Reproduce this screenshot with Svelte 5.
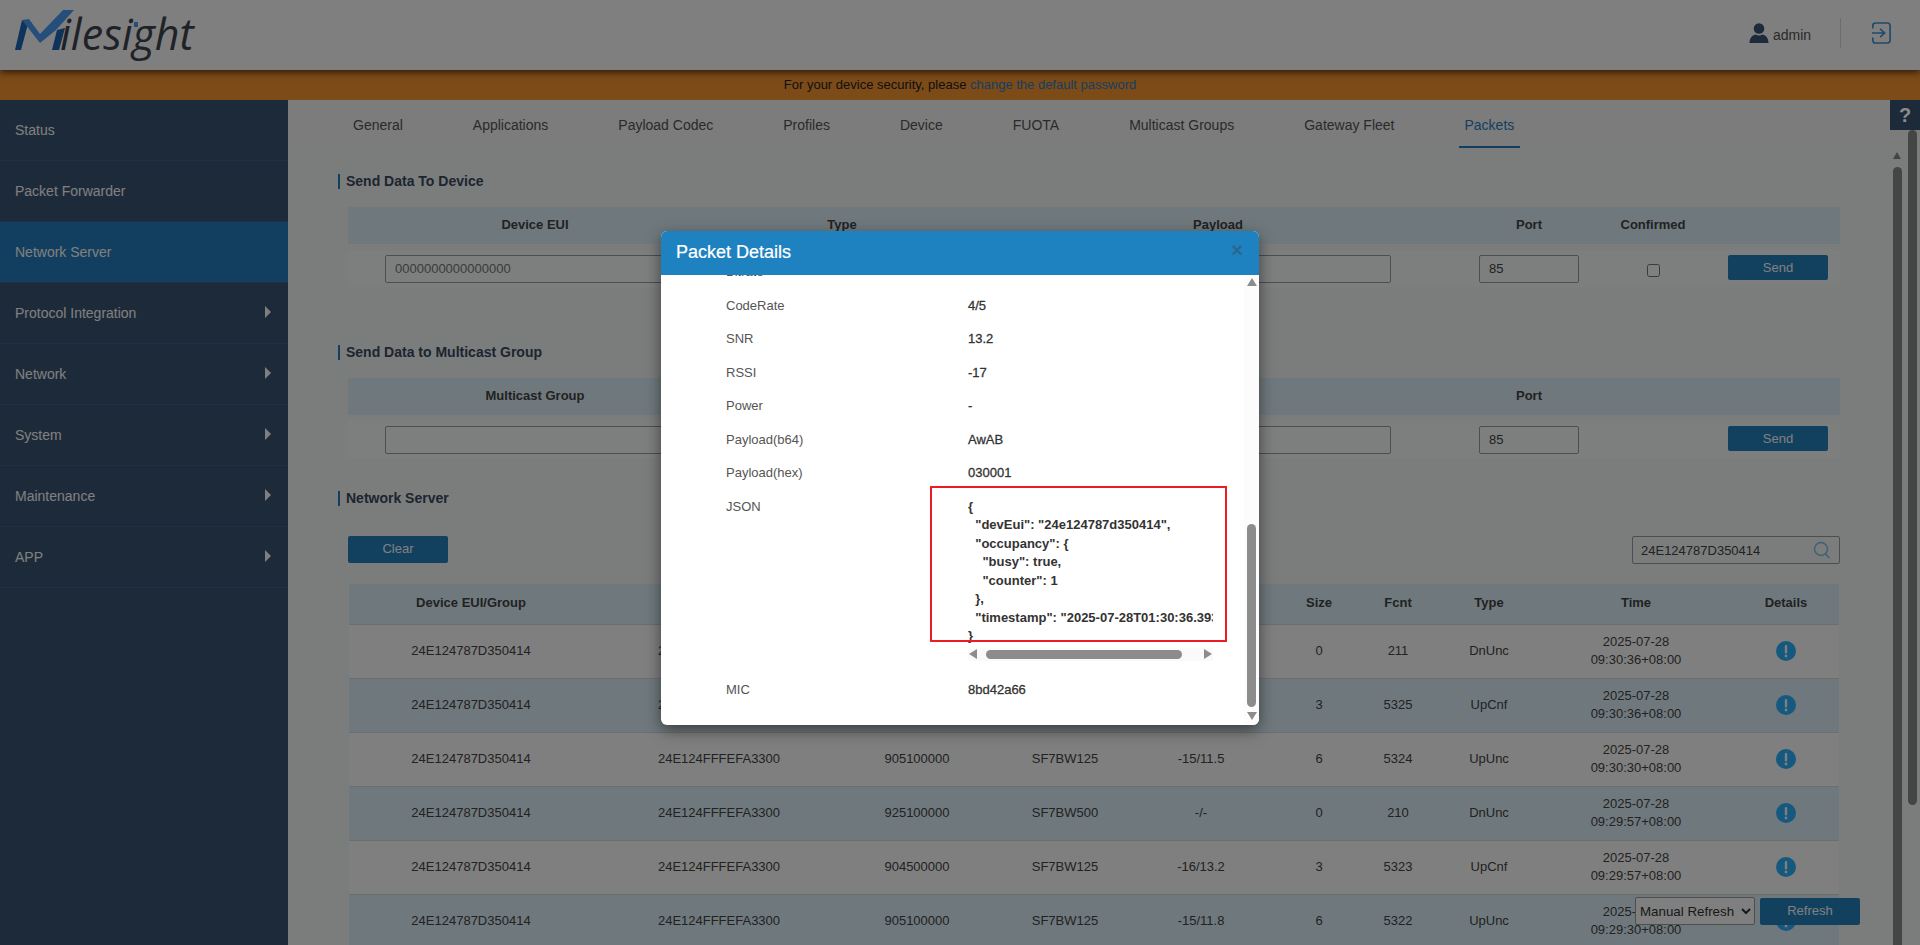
<script>
  const nav = [
    { label: 'Status' }, { label: 'Packet Forwarder' }, { label: 'Network Server', active: true },
    { label: 'Protocol Integration', arrow: true }, { label: 'Network', arrow: true }, { label: 'System', arrow: true },
    { label: 'Maintenance', arrow: true }, { label: 'APP', arrow: true }
  ];
  const tabs = ['General', 'Applications', 'Payload Codec', 'Profiles', 'Device', 'FUOTA', 'Multicast Groups', 'Gateway Fleet', 'Packets'];
  const heads = ['Device EUI/Group', 'Gateway', 'Frequency', 'Datarate', 'RSSI/SNR', 'Size', 'Fcnt', 'Type', 'Time', 'Details'];
  const packets = [
    ['925100000', 'SF7BW500', '-/-', '0', '211', 'DnUnc', '09:30:36+08:00'],
    ['904500000', 'SF7BW125', '-17/13.2', '3', '5325', 'UpCnf', '09:30:36+08:00'],
    ['905100000', 'SF7BW125', '-15/11.5', '6', '5324', 'UpUnc', '09:30:30+08:00'],
    ['925100000', 'SF7BW500', '-/-', '0', '210', 'DnUnc', '09:29:57+08:00'],
    ['904500000', 'SF7BW125', '-16/13.2', '3', '5323', 'UpCnf', '09:29:57+08:00'],
    ['905100000', 'SF7BW125', '-15/11.8', '6', '5322', 'UpUnc', '09:29:30+08:00']
  ];
  const details = [
    ['Bitrate', '-'], ['CodeRate', '4/5'], ['SNR', '13.2'], ['RSSI', '-17'], ['Power', '-'],
    ['Payload(b64)', 'AwAB'], ['Payload(hex)', '030001']
  ];
  const json = `{
  "devEui": "24e124787d350414",
  "occupancy": {
    "busy": true,
    "counter": 1
  },
  "timestamp": "2025-07-28T01:30:36.393+00:00"
}`;
</script>

<div class="page">
  <header class="top">
    <div class="logo">
      <span class="word">ilesight<i class="tittle"></i></span>
      <svg class="mark" width="62" height="42" viewBox="0 0 62 42">
        <polygon class="m-dark" points="0,41 6,41 13,15 7,11" />
        <polygon class="m-mid" points="7,11 14,10 25,25 48,1 59,1 41,21 25,34" />
        <polygon class="m-dark" points="37,41 44,41 50,19 42,21" />
      </svg>
    </div>
    <div class="user">
      <svg width="20" height="20" viewBox="0 0 20 20">
        <circle cx="10" cy="5.5" r="5.3" fill="#3a5474" />
        <path d="M0.5 20c0-5 2.5-7.5 6-8.5 2 1.4 5 1.4 7 0 3.5 1 6 3.500 6 8.500z" fill="#3a5474" />
      </svg>
      <span>admin</span>
    </div>
    <div class="sep"></div>
    <svg class="logout" width="20" height="24" viewBox="0 0 22 24" fill="none" stroke="#3d95d0" stroke-width="1.8">
      <path d="M2 7V4q0-3 3-3h13q3 0 3 3v16q0 3-3 3H5q-3 0-3-3v-3" />
      <path d="M1 12h13M10 7.500l5 4.500-5 4.500" />
    </svg>
  </header>

  <div class="banner">For your device security, please <a href="#top">change the default password</a></div>

  <div class="main">
    <aside class="side">
      {#each nav as n}
        <div class="nav" class:active={n.active}>
          <span>{n.label}</span>
          {#if n.arrow}<i class="tri"></i>{/if}
        </div>
      {/each}
    </aside>

    <section class="content">
      <nav class="tabs">
        {#each tabs as t}
          <span class="tab" class:on={t === 'Packets'}>{t}</span>
        {/each}
      </nav>

      <div class="body">
        <h3 class="title first">Send Data To Device</h3>
        <div class="send head">
          <span>Device EUI</span><span>Type</span><span>Payload</span><span>Port</span><span>Confirmed</span><span></span>
        </div>
        <div class="send row">
          <span><input class="field wide" value="0000000000000000" readonly /></span>
          <span></span>
          <span><input class="field pay" readonly /></span>
          <span><input class="field port" value="85" readonly /></span>
          <span><input class="check" type="checkbox" /></span>
          <span class="act"><button class="btn">Send</button></span>
        </div>

        <h3 class="title second">Send Data to Multicast Group</h3>
        <div class="send head">
          <span>Multicast Group</span><span>Type</span><span>Payload</span><span>Port</span><span></span><span></span>
        </div>
        <div class="send row">
          <span><input class="field wide" readonly /></span>
          <span></span>
          <span><input class="field pay" readonly /></span>
          <span><input class="field port" value="85" readonly /></span>
          <span></span>
          <span class="act"><button class="btn">Send</button></span>
        </div>

        <h3 class="title third">Network Server</h3>
        <div class="tools">
          <button class="btn clear">Clear</button>
          <div class="search">
            <span>24E124787D350414</span>
            <svg width="18" height="18" viewBox="0 0 18 18" fill="none" stroke="#7cbfe0" stroke-width="1.4">
              <circle cx="8" cy="8" r="6.500" /><path d="M12.500 13l4 4" />
            </svg>
          </div>
        </div>

        <table class="grid">
          <colgroup>
            <col class="c1" /><col class="c2" /><col class="c3" /><col class="c4" /><col class="c5" />
            <col class="c6" /><col class="c7" /><col class="c8" /><col class="c9" /><col class="c10" />
          </colgroup>
          <thead>
            <tr>{#each heads as h}<th>{h}</th>{/each}</tr>
          </thead>
          <tbody>
            {#each packets as p}
              <tr>
                <td>24E124787D350414</td>
                <td>24E124FFFEFA3300</td>
                <td>{p[0]}</td><td>{p[1]}</td><td>{p[2]}</td><td>{p[3]}</td><td>{p[4]}</td><td>{p[5]}</td>
                <td>2025-07-28<br />{p[6]}</td>
                <td>
                  <svg class="info" width="20" height="20" viewBox="0 0 20 20">
                    <circle cx="10" cy="10" r="10" fill="#2ab2ff" />
                    <rect x="8.800" y="4" width="2.400" height="8.500" rx="1" fill="#fff" />
                    <circle cx="10" cy="15" r="1.400" fill="#fff" />
                  </svg>
                </td>
              </tr>
            {/each}
          </tbody>
        </table>
      </div>

      <div class="inner-bar"><i class="up"></i><b></b></div>
    </section>

    <div class="refresh">
      <select><option>Manual Refresh</option></select>
      <button class="btn ref">Refresh</button>
    </div>
    <div class="page-bar"></div>
  </div>

  <div class="shade"></div>
  <div class="help">?</div>

  <div class="modal">
    <div class="m-head"><span>Packet Details</span><b>×</b></div>
    <div class="m-body">
      <div class="m-rows">
        {#each details as d}
          <div class="m-row"><span class="k">{d[0]}</span><span class="v">{d[1]}</span></div>
        {/each}
        <div class="m-row json">
          <span class="k">JSON</span>
          <div class="jwrap">
            <pre>{json}</pre>
            <div class="hbar"><i class="l"></i><b></b><i class="r"></i></div>
          </div>
        </div>
        <div class="m-row"><span class="k">MIC</span><span class="v">8bd42a66</span></div>
      </div>
      <div class="m-scroll"><i class="up"></i><b></b><i class="down"></i></div>
    </div>
    <div class="mark-box"></div>
  </div>
</div>

<style>
  :global(body) { margin: 0; font-family: "Liberation Sans", Arial, sans-serif; }
  .page { position: relative; height: 945px; overflow: hidden; background: #f6faf8; color: #333; font-size: 13px; }
  .top { position: relative; z-index: 2; height: 70px; background: #fff; box-shadow: 0 2px 7px rgba(0,0,0,.7); display: flex; align-items: center; }
  .logo { position: relative; margin-left: 15px; height: 42px; margin-top: -10px; width: 1734px; flex: none; }
  .mark { position: absolute; left: 0; top: 0; }
  .m-dark { fill: #1c66b8; }
  .m-mid { fill: #4a9ff5; }
  .word { position: absolute; left: 45px; top: 0; font: italic 400 43px/50px "Open Sans", sans-serif; color: #3e464e; }
  .tittle { position: absolute; left: 74px; top: 13px; width: 4px; height: 5px; background: #4a9ff5; }
  .user { display: flex; align-items: center; gap: 4px; font-size: 14px; color: #555; width: 91px; flex: none; }
  .user svg { margin-top: -4px; }
  .sep { width: 1px; height: 30px; background: #d8d8d8; flex: none; margin-top: -4px; }
  .logout { margin: -4px 0 0 30px; flex: none; }
  .banner { height: 30px; background: #f89630; text-align: center; line-height: 30px; font-size: 13px; color: #222; }
  .banner a { color: #2a7fc0; text-decoration: none; }
  .main { position: relative; display: flex; height: 845px; }
  .side { width: 288px; flex: none; background: #3a5474; color: #fff; font-size: 14px; }
  .nav { height: 60px; border-bottom: 1px solid #42608a; display: flex; align-items: center; justify-content: space-between; padding: 0 17px 0 15px; }
  .nav.active { background: #257ebe; }
  .tri { border-left: 6px solid #fff; border-top: 6px solid transparent; border-bottom: 6px solid transparent; margin-top: -3px; }
  .content { position: relative; flex: 1; min-width: 0; }
  .tabs { height: 48px; background: #f8f9f9; box-sizing: border-box; display: flex; gap: 59px; padding-left: 59.500px; margin-right: 16px; font-size: 14px; color: #555; }
  .tab { padding: 0 5.500px; line-height: 50px; height: 46px; }
  .tab.on { color: #2a7fc0; border-bottom: 2px solid #257ebe; }
  .body { padding-left: 50px; width: 1552px; box-sizing: border-box; }
  .title { margin: 0; height: 15px; line-height: 15px; font-size: 14px; font-weight: bold; color: #3a4a60; border-left: 2px solid #257ebe; padding-left: 6px; box-sizing: border-box; white-space: nowrap; }
  .title.first { margin: 26px 0 18px; }
  .title.second { margin: 58px 0 18px; }
  .title.third { margin: 33px 0 30px; }
  .send { display: grid; grid-template-columns: 374px 240px 512px 110px 138px 118px; margin-left: 10px; height: 37px; align-items: center; text-align: center; width: 1492px; }
  .send.head { background: #def2fa; font-weight: bold; color: #444; box-sizing: border-box; padding-bottom: 3px; }
  .send.row { margin-top: 6px; background: #fafdfc; }
  .field { box-sizing: border-box; height: 28px; border: 1px solid #9a9e9f; border-radius: 2px; padding: 0 9px; font: 13px "Liberation Sans", Arial, sans-serif; color: #444; background: #fff0; vertical-align: middle; }
  .wide { width: 300px; color: #777; }
  .pay { width: 346px; }
  .port { width: 100px; }
  .check { width: 13px; height: 13px; margin: 4px 0 0; vertical-align: middle; }
  .btn { width: 100px; height: 25px; border: 0; border-radius: 2px; background: #2482be; color: #fff; font: 13px "Liberation Sans", Arial, sans-serif; padding: 0; }
  .send .btn { margin-top: -3px; display: inline-block; }
  .act { padding-right: 6px; }
  .tools { display: flex; justify-content: space-between; align-items: flex-start; margin-left: 10px; width: 1492px; height: 48px; }
  .clear { height: 27px; padding-bottom: 2px; }
  .search { box-sizing: border-box; width: 208px; height: 28px; border: 1px solid #9a9e9f; border-radius: 2px; display: flex; align-items: center; justify-content: space-between; padding: 0 8px; color: #444; }
  .grid { border-collapse: collapse; table-layout: fixed; margin-left: 11px; width: 1490px; text-align: center; }
  .c1 { width: 244px; } .c2 { width: 252px; } .c3 { width: 144px; } .c4 { width: 152px; } .c5 { width: 144px; }
  .c6 { width: 68px; } .c7 { width: 90px; } .c8 { width: 92px; } .c9 { width: 202px; } .c10 { width: 102px; }
  .grid th { height: 40px; background: #def2fa; font-weight: bold; color: #444; padding: 0 0 2px; box-sizing: border-box; }
  .grid td { height: 53px; padding: 0; line-height: 18.500px; border-top: 1px solid #d7dcde; color: #444; background: #fff; }
  .grid th:nth-child(5), .grid td:nth-child(5) { padding-right: 24px; }
  .grid th:nth-child(10), .grid td:nth-child(10) { padding-right: 4px; }
  .grid tbody tr:nth-child(even) td { background: #def2fa; }
  .info { display: block; margin: 0 auto; }
  .inner-bar { position: absolute; left: 1605px; top: 50px; width: 9px; height: 800px; }
  .inner-bar .up { position: absolute; left: 0; top: 2px; border: 4.500px solid transparent; border-top: 0; border-bottom: 7px solid #888; }
  .inner-bar b { position: absolute; left: 0; top: 17px; bottom: 0; width: 9px; border-radius: 5px 5px 0 0; background: #8a8a8a; }
  .page-bar { position: absolute; left: 1908px; top: 30px; width: 9px; height: 675px; border-radius: 5px; background: #8a8a8a; }
  .refresh { position: absolute; left: 1635px; top: 797px; display: flex; gap: 5px; }
  .refresh select { width: 120px; height: 28px; box-sizing: border-box; font: 13.330px "Liberation Sans", Arial, sans-serif; color: #333; background: #fff; border: 1px solid #9a9e9f; border-radius: 2px; }
  .ref { height: 27px; margin-top: 1px; padding-bottom: 2px; }
  .shade { position: absolute; inset: 0; z-index: 5; background: rgba(0,0,0,.5); }
  .help { position: absolute; z-index: 6; left: 1890px; top: 100px; width: 30px; height: 30px; background: #1d2a3a; color: #8c8c8c; font: bold 20px/30px "Liberation Sans", Arial, sans-serif; text-align: center; }
  .modal { position: absolute; z-index: 7; left: 661px; top: 231px; width: 598px; height: 494px; background: #fff; border-radius: 6px; box-shadow: 0 5px 15px rgba(0,0,0,.5); overflow: hidden; }
  .m-head { height: 44px; background: #1f82c0; color: #fff; display: flex; align-items: center; justify-content: space-between; padding: 0 15px; font-size: 18px; }
  .m-head span { margin-top: -2px; -webkit-text-stroke: .2px #fff; }
  .m-head b { font-size: 20px; color: #27688f; margin-top: -6px; margin-right: 1px; }
  .m-body { position: relative; height: 450px; overflow: hidden; }
  .m-rows { margin-top: -19.750px; padding-left: 65px; }
  .m-row { display: flex; height: 33.500px; line-height: 33.500px; color: #555; }
  .k { width: 242px; flex: none; }
  .v { color: #333; -webkit-text-stroke: .3px #333; }
  .m-row.json { height: 183.500px; line-height: 18.500px; padding-top: 8px; box-sizing: border-box; }
  .jwrap { width: 245px; }
  pre { margin: 0; height: 148px; overflow: hidden; font: bold 13px/18.500px "Liberation Sans", Arial, sans-serif; color: #333; }
  .hbar { position: relative; margin-top: 2px; height: 13px; background: #fafafa; }
  .hbar b { position: absolute; left: 18px; right: 31px; top: 2px; height: 9px; border-radius: 5px; background: #8c8c8c; }
  .hbar i { position: absolute; top: 1px; border: 5.500px solid transparent; }
  .hbar .l { left: 1px; border-left: 0; border-right: 8px solid #8c8c8c; }
  .hbar .r { right: 1px; border-right: 0; border-left: 8px solid #8c8c8c; }
  .m-scroll { position: absolute; right: 0; top: 0; bottom: 0; width: 15px; background: #fcfcfc; }
  .m-scroll b { position: absolute; left: 3px; top: 249px; width: 9px; height: 183px; border-radius: 5px; background: #8c8c8c; }
  .m-scroll i { position: absolute; left: 3px; border: 4.500px solid transparent; }
  .m-scroll .up { top: 3px; border-width: 0 5px 8px; border-bottom-color: #8c8c8c; left: 2.500px; }
  .m-scroll .down { top: 437px; border-width: 8px 5px 0; border-top-color: #8c8c8c; left: 2.500px; }
  .mark-box { position: absolute; left: 269px; top: 255px; width: 297px; height: 156px; box-sizing: border-box; border: 2px solid #ed1c24; }
</style>
